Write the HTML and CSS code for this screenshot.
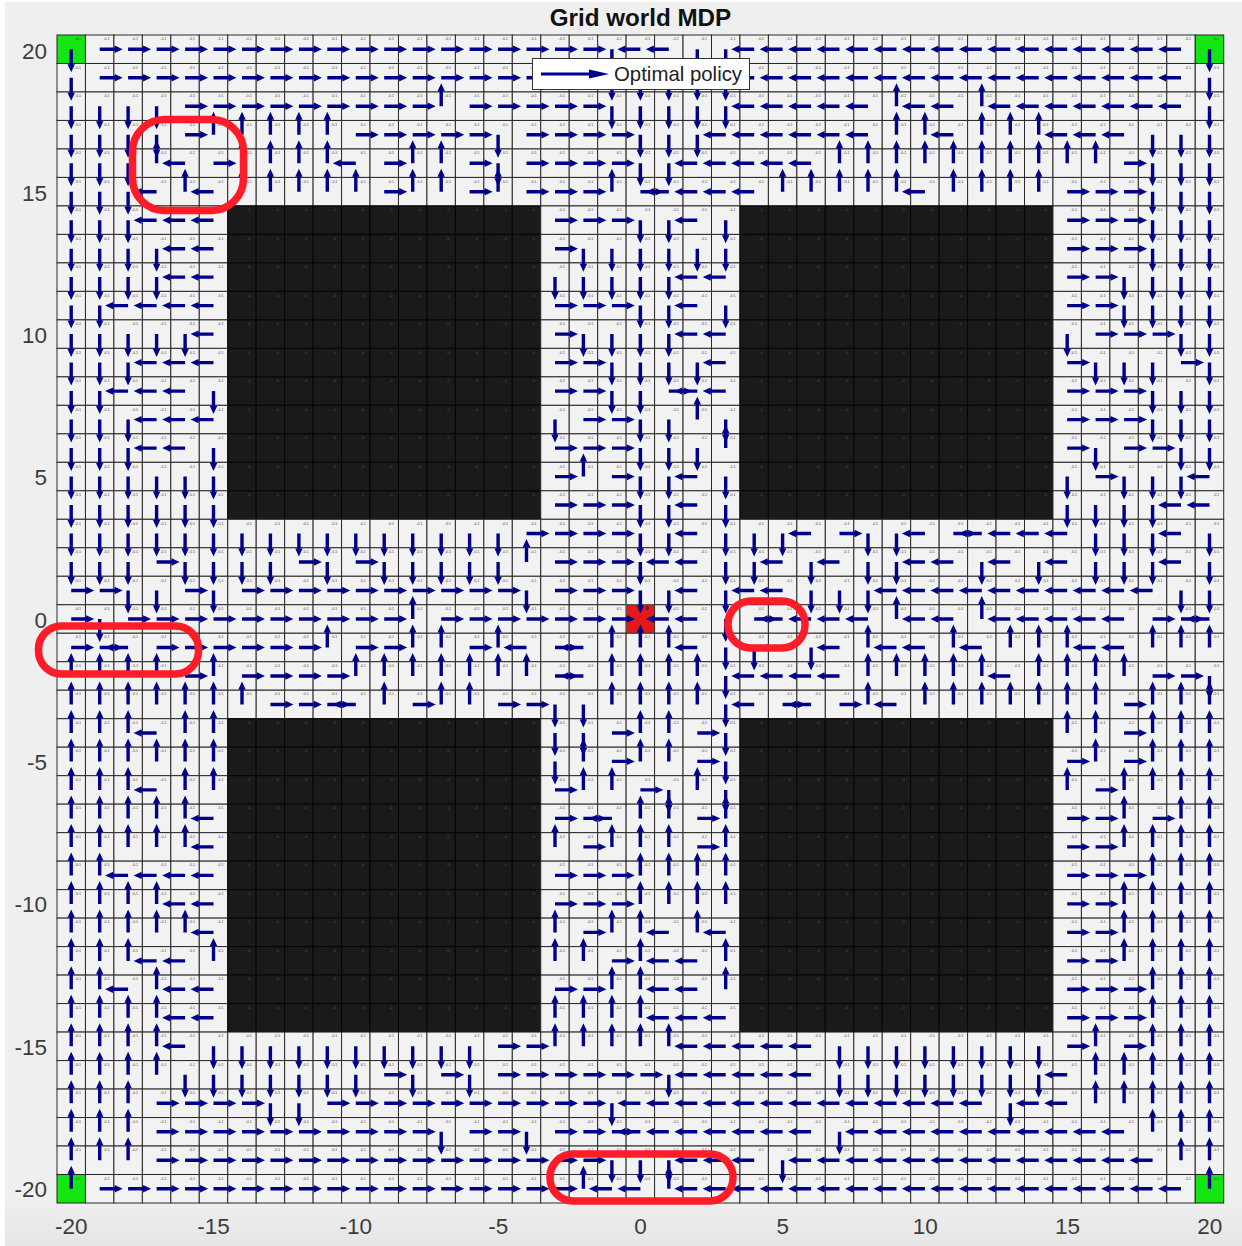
FILE: index.html
```html
<!DOCTYPE html>
<html lang="en">
<head>
<meta charset="utf-8">
<title>Grid world MDP</title>
<link rel="stylesheet" href="styles.css">
</head>
<body>
<main class="figure">
  <h1 class="title">Grid world MDP</h1>
  <div class="y-axis">
    <span>20</span><span>15</span><span>10</span><span>5</span><span>0</span><span>-5</span><span>-10</span><span>-15</span><span>-20</span>
  </div>
  <div class="plot" id="plot">
    <svg class="ovals" viewBox="0 0 1167 1168" width="1167" height="1168">
      <rect x="75.5" y="84.500" width="111" height="91" rx="32"/>
      <rect x="-18.500" y="591" width="160" height="48" rx="23"/>
      <rect x="671" y="566" width="77" height="47" rx="23"/>
      <rect x="493" y="1119" width="183" height="47" rx="23"/>
    </svg>
    <div class="legend">
      <svg class="legend-key" viewBox="0 0 68 12" width="68" height="12">
        <path d="M0 6H50" class="legend-shaft"/>
        <path d="M48 1.500L68 6L48 10.500Z" class="legend-head"/>
      </svg>
      <span class="legend-text">Optimal policy</span>
    </div>
  </div>
  <div class="x-axis">
    <span>-20</span><span>-15</span><span>-10</span><span>-5</span><span>0</span><span>5</span><span>10</span><span>15</span><span>20</span>
  </div>
</main>
<script src="app.js"></script>
</body>
</html>
```
FILE: styles.css
```css
* { box-sizing: border-box; }
html, body { margin: 0; padding: 0; background: #fff; }
body { width: 1242px; height: 1246px; overflow: hidden; font-family: "Liberation Sans", Arial, sans-serif; }

.figure {
  margin: 2px 0 0 5px;
  width: 1237px;
  height: 1244px;
  display: grid;
  grid-template-columns: 52px 1167px 18px;
  grid-template-rows: 33px 1168px 43px;
  background: linear-gradient(to bottom, #efefef 0, #efefef 1195px, #e6e6e6 1244px);
}
.title {
  grid-column: 2;
  grid-row: 1;
  margin: 0;
  padding-top: 3px;
  font-size: 24.2px;
  line-height: 26px;
  font-weight: 700;
  text-align: center;
  color: #111;
}
.y-axis {
  grid-column: 1;
  grid-row: 2;
  display: flex;
  flex-direction: column;
  justify-content: space-between;
  align-items: flex-end;
  padding: 4.5px 10px 1px 0;
  font-size: 22.5px;
  line-height: 24px;
  color: #3c3c3c;
}
.x-axis {
  grid-column: 2;
  grid-row: 3;
  display: flex;
  justify-content: space-between;
  padding: 12px 14.2px 0;
  font-size: 22.5px;
  line-height: 24px;
  color: #3c3c3c;
}
.x-axis span {
  width: 0;
  display: flex;
  justify-content: center;
}
.plot {
  grid-column: 2;
  grid-row: 2;
  position: relative;
  width: 1167px;
  height: 1168px;
}
.grid-svg { display: block; overflow: visible; }
.cell { fill: #f2f2f2; stroke: #2a2a2a; stroke-width: 1; }
.cell-wall { fill: #1a1a1a; stroke: #050505; }
.cell-goal { fill: #14e614; stroke: #222; }
.cell-start { fill: #e61919; stroke: #555; }
.value { font-size: 3.6px; fill: #444; text-anchor: middle; }
.value-wall { fill: #555; }
.value-start { fill: #111; font-weight: 700; font-size: 5px; }
.arrow { fill: #00008b; stroke: none; }

.ovals {
  position: absolute;
  left: 0;
  top: 0;
  overflow: visible;
  pointer-events: none;
  z-index: 2;
}
.ovals rect { fill: none; stroke: #fd1c28; stroke-width: 7.5; }

.legend {
  position: absolute;
  left: 475px;
  top: 23px;
  width: 218px;
  height: 32px;
  display: flex;
  align-items: center;
  gap: 5px;
  padding-left: 8px;
  background: #fff;
  border: 1px solid #333;
  z-index: 1;
}
.legend-key { flex: none; }
.legend-shaft { stroke: #00008b; stroke-width: 3; fill: none; }
.legend-head { fill: #00008b; }
.legend-text { font-size: 20.4px; line-height: 24px; color: #222; white-space: nowrap; }
```
FILE: app.js
```js
var POLICY = [
"DRRRRR RRRRRRRRRRR RRDLLDD LLLLLLLLLLL LLLLLD",
"DRRRRR RRRRRRRRRRR RRDDDDD LLLLLLLLLLL LLLLLD",
"DDDDRR RRRRRRRURRR RRDDDDD LLLLLULLULL LLLLLD",
"DDDDRU UUUURRRRRDR RRRDDDL LLLLLUULUUU LLLDDD",
"DDDULR UUUULRUURDR RRRDDLL LLLUUUUUUUU UURDDD",
"DDDLUL UUUUURUURUR RRURLLL LUUUUULUUUU RRRDDD",
"DDDLLL ########### RRRDDLD ########### RRRDDD",
"DDDDLL ########### RDDDDDD ########### RRRDDD",
"DDDDLL ########### DDDDDLL ########### RRDDDD",
"DDLLLL ########### RRRDDLD ########### RRDDDD",
"DDDDDL ########### RDDDDLL ########### DRRRDD",
"DDDLLL ########### RRDDDDL ########### RDDDRD",
"DDLLLD ########### RRDDRLL ########### RRRDDD",
"DDDLLL ########### DRRDDUD ########### RRRDDD",
"DDDLLD ########### RRRDDDU ########### RDRRDD",
"DDDDDD ########### RURDDLD ########### DRDDDL",
"DDDDDD ########### RRRDDLD ########### DDDDLL",
"DDDDDD DDDDDDDDDDR RRRDDLD DDLRDDLRLLL LDDDLD",
"DDDRDD DDRDRDDDDDU RRRDLLD DLDLDDLLDLD LDDDLD",
"RRDDRD RRRRRRRRRRD RRRDDLD LLDDDLLLLLL LLLLDD",
"RDRRRR RRRRRRURRRR RRR.LLD RLLLLULLULL LLLRRL",
"RRLRRR RRRURRUURUL RLUUULD DLDLULLULUU ULLUUU",
"UUUURU RRRRUUUUUUU RLUUUUD LLLLUUUUULU UUURRD",
"UUUUUU URRRLURUURR DDUUUUD LRLRULUUUUU UURUUU",
"UUULUU ########### DDRUURD ########### UURUUU",
"UUUUUU ########### DURUURD ########### RURUUU",
"UUULUU ########### RUURDUD ########### URUUUU",
"UUUUUL ########### RRLUURU ########### RRURUU",
"UUUUUL ########### URUUURU ########### RRUUUU",
"UULLLL ########### RRRUUUU ########### RRRUUU",
"UUUULL ########### RRRUUUU ########### RRUUUU",
"UUUUUL ########### URUULUL ########### RRUUUU",
"UUULLU ########### UURULLU ########### RRUUUU",
"UULULL ########### RRUULLU ########### RRRUUU",
"UUUULL ########### UUUULLL ########### RRRUUU",
"UUUULD DDDDDDDDDRR UUUUULL LLLDDDDDDDD RURUUU",
"UUUUDD DDDDDRDRDRR RRRRDLL LLLDDDDDDDD LUUUUU",
"UUURRR RDDRRRRRRRR RRDLLLL LLLLLLLLLDL LUUUUU",
"UUURRR RRRRRRRDRRD RRRLLLL LLLDLLLLLLL LLLUUU",
"UUURRR RRRRRRRRRRR RRDDDLL LDLLLLLLLLL LLLLUU",
"URRRRR RRRRRRRRRRR RULLULL LLLLLLLLLLL LLLLLU"
];

var NS = "http://www.w3.org/2000/svg";
var N = 41;
var CW = 1166.7 / N;
var CH = 1168 / N;

function el(name, attrs, text) {
  var node = document.createElementNS(NS, name);
  for (var key in attrs) node.setAttribute(key, attrs[key]);
  if (text !== undefined) node.textContent = text;
  return node;
}

function arrowPath(cx, cy, d) {
  var L = 23, H = 8, W = 3.7, S = 1.7, p;
  if (d === "R") p = [[0,-S],[L-H,-S],[L-H,-W],[L,0],[L-H,W],[L-H,S],[0,S]];
  if (d === "L") p = [[0,-S],[-L+H,-S],[-L+H,-W],[-L,0],[-L+H,W],[-L+H,S],[0,S]];
  if (d === "D") p = [[-S,0],[-S,L-H],[-W,L-H],[0,L],[W,L-H],[S,L-H],[S,0]];
  if (d === "U") p = [[-S,0],[-S,-L+H],[-W,-L+H],[0,-L],[W,-L+H],[S,-L+H],[S,0]];
  return "M" + p.map(function (q) {
    return (cx + q[0]).toFixed(1) + " " + (cy + q[1]).toFixed(1);
  }).join("L") + "Z";
}

function build() {
  var svg = el("svg", { "class": "grid-svg", viewBox: "0 0 1167 1168", width: 1167, height: 1168 });
  var cells = el("g", {}), values = el("g", {}), arrows = el("g", {});
  POLICY.forEach(function (line, r) {
    var row = line.replace(/ /g, "");
    for (var c = 0; c < N; c++) {
      var ch = row.charAt(c);
      var x = c * CW, y = r * CH;
      var goal = (r === 0 || r === N - 1) && (c === 0 || c === N - 1);
      var start = r === 20 && c === 20;
      var wall = ch === "#";
      var cls = "cell" + (wall ? " cell-wall" : goal ? " cell-goal" : start ? " cell-start" : "");
      cells.appendChild(el("rect", { "class": cls, x: x.toFixed(2), y: y.toFixed(2), width: CW.toFixed(2), height: CH.toFixed(2) }));
      values.appendChild(el("text", {
        "class": "value" + (wall ? " value-wall" : start ? " value-start" : ""),
        x: (x + 21).toFixed(1),
        y: (y + 5.2).toFixed(1)
      }, wall ? "-0" : start ? "0" : "-0.1"));
      if ("RLUD".indexOf(ch) >= 0) {
        arrows.appendChild(el("path", { "class": "arrow", d: arrowPath(x + CW / 2, y + CH / 2, ch) }));
      }
    }
  });
  svg.appendChild(cells);
  svg.appendChild(values);
  svg.appendChild(arrows);
  var plot = document.getElementById("plot");
  plot.insertBefore(svg, plot.firstChild);
}

build();
```
